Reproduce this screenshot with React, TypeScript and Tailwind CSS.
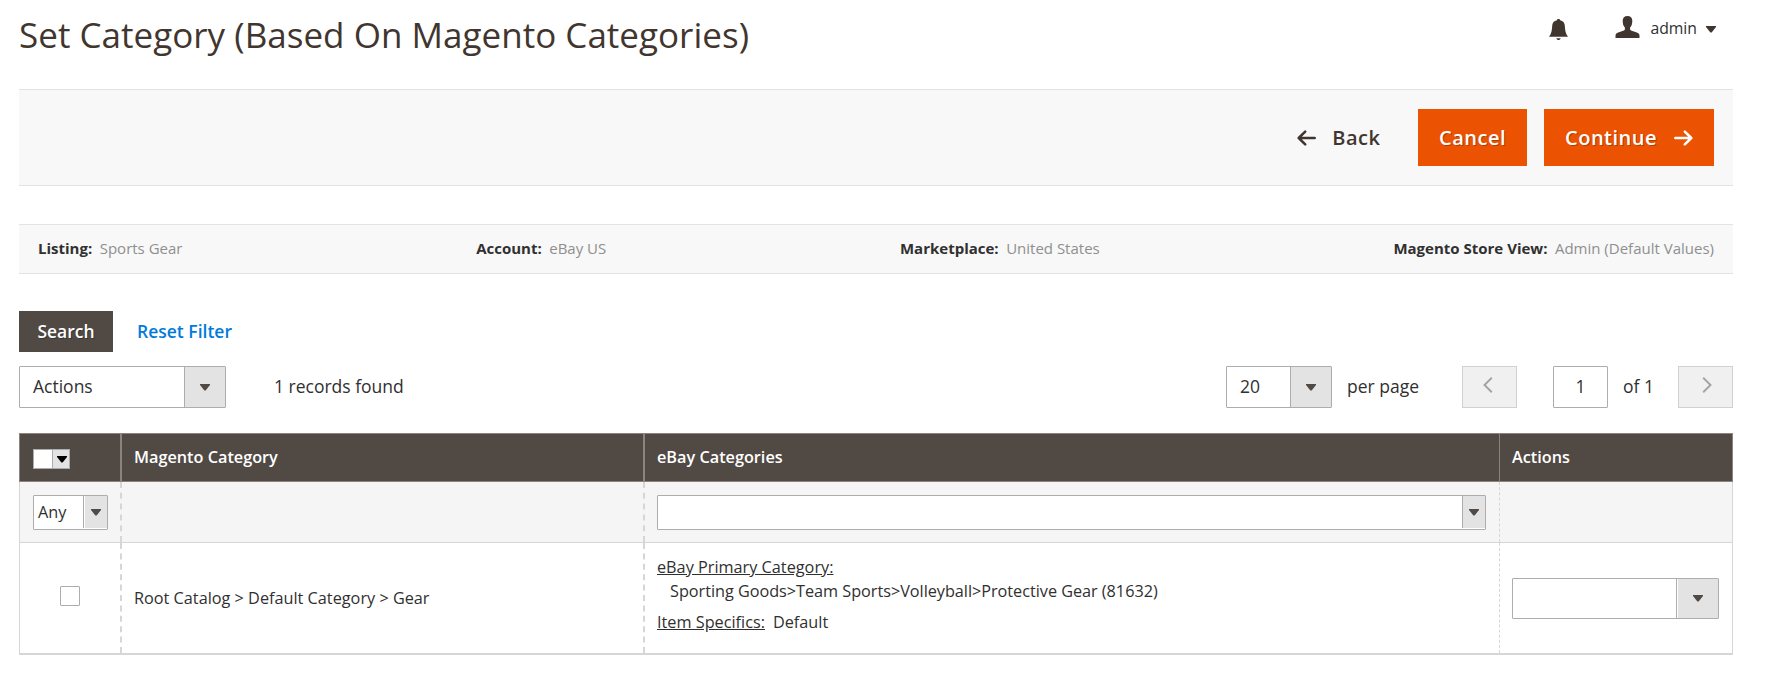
import clsx from 'clsx';

interface SelectBoxProps {
    value?: string;
    className?: string;
    arrowClassName?: string;
}

const infoItems = [
    { label: 'Listing:', value: 'Sports Gear' },
    { label: 'Account:', value: 'eBay US' },
    { label: 'Marketplace:', value: 'United States' },
    { label: 'Magento Store View:', value: 'Admin (Default Values)' },
];

function Caret({ className = 'text-[#514943]' }: { className?: string }) {
    return (
        <svg width="10" height="7" viewBox="0 0 10 7" className={clsx('shrink-0', className)} fill="currentColor">
            <path d="M0 0h10v1L5.6 6.6h-1.2L0 1z" />
        </svg>
    );
}

function BellIcon() {
    return (
        <svg width="19" height="22" viewBox="0 0 19 22" fill="#41362f" className="mt-1">
            <path d="M9.5 0c1 0 1.5.6 1.6 1.2 3 .6 4.5 2.6 4.7 5.3.2 4.3.6 8 3.2 11.2H0C2.6 14.5 3 10.8 3.2 6.5 3.4 3.8 4.9 1.8 7.9 1.2 8 .6 8.5 0 9.5 0z" />
            <path d="M7.3 19.2h4.4c-.3 1.2-1.1 1.8-2.2 1.8s-1.9-.6-2.2-1.8z" />
        </svg>
    );
}

function UserIcon() {
    return (
        <svg width="25" height="22" viewBox="0 0 25 22" fill="#41362f" className="-mt-1">
            <path d="M12.5 0c3 0 4.8 1.7 4.8 4.7 0 3-.6 5.3-2.2 6.9v1.8c.5 1.2 2.3 1.6 4.6 2.4 3.3 1.1 4.8 1.9 4.8 3.9v2.3H.5v-2.3c0-2 1.5-2.8 4.8-3.9 2.3-.8 4.1-1.2 4.6-2.4v-1.8C8.3 10 7.7 7.7 7.7 4.7 7.7 1.7 9.5 0 12.5 0z" />
        </svg>
    );
}

function ArrowIcon({ flipped }: { flipped?: boolean }) {
    return (
        <svg
            width="19"
            height="16"
            viewBox="0 0 19 16"
            fill="none"
            stroke="currentColor"
            strokeWidth="2.5"
            strokeLinecap="round"
            strokeLinejoin="round"
            className={clsx('shrink-0', flipped && '-scale-x-100')}
        >
            <path d="M1.3 8h16M10.8 1.6 17.3 8l-6.5 6.4" />
        </svg>
    );
}

function Chevron({ flipped }: { flipped?: boolean }) {
    return (
        <svg
            width="10"
            height="16"
            viewBox="0 0 10 16"
            fill="none"
            stroke="#a6a29f"
            strokeWidth="1.9"
            className={clsx('-mt-1', flipped ? 'mr-1 -scale-x-100' : 'ml-[3px]')}
        >
            <path d="M1.2 .8 8.5 8l-7.3 7.2" />
        </svg>
    );
}

// Select-like box with the grey arrow cell on the right
function SelectBox({ value, className, arrowClassName }: SelectBoxProps) {
    return (
        <div className={clsx('flex rounded-[1px] border border-[#adadad] bg-white', className)}>
            <span className="-mt-0.5 flex flex-1 items-center">{value}</span>
            <span className={clsx('flex items-center justify-center border-l border-[#adadad]', arrowClassName)}>
                <Caret />
            </span>
        </div>
    );
}

function PageHeader() {
    return (
        <header className="flex h-[89px] items-start justify-between">
            <h1 className="pt-[11px] text-[35px] leading-[48px] tracking-[0.02px] text-[#41362f]">
                Set Category (Based On Magento Categories)
            </h1>
            <div className="flex items-start pt-[15px] pr-[17px]">
                <BellIcon />
                <div className="mt-0.5 ml-[47px] flex h-6 items-center">
                    <UserIcon />
                    <span className="mr-[9px] ml-[10px] text-[15.75px]">admin</span>
                    <Caret className="text-[#41362f]" />
                </div>
            </div>
        </header>
    );
}

function PageActions() {
    return (
        <div className="flex h-[97px] items-center justify-end border-y border-[#e3e3e3] bg-[#f8f8f8] pr-[19px] text-[20px] font-semibold tracking-[0.5px]">
            <button className="mr-[37.5px] flex items-center gap-4 text-[#41362f]">
                <ArrowIcon flipped />
                Back
            </button>
            <button className="mr-[17px] flex h-[57px] w-[109px] items-center justify-center bg-[#eb5202] text-white text-shadow-[1px_1px_0_rgba(0,0,0,0.25)]">
                Cancel
            </button>
            <button className="flex h-[57px] w-[170px] items-center justify-between bg-[#eb5202] px-[21px] text-white text-shadow-[1px_1px_0_rgba(0,0,0,0.25)]">
                Continue
                <ArrowIcon />
            </button>
        </div>
    );
}

function ListingInfo() {
    return (
        <div className="mt-[38px] flex h-[50px] items-center justify-between border-y border-[#e3e3e3] bg-[#f8f8f8] px-[19px] pb-0.5 text-[15px]">
            {infoItems.map(item => (
                <div key={item.label} className="flex gap-[7.5px]">
                    <span className="font-bold">{item.label}</span>
                    <span className="text-[#8f8f8f]">{item.value}</span>
                </div>
            ))}
        </div>
    );
}

function GridToolbar() {
    return (
        <div className="mt-[37px] text-[17.5px]">
            <div className="flex items-center font-semibold">
                <button className="h-[41px] w-[94px] bg-[#514943] text-white text-shadow-[1px_1px_0_rgba(0,0,0,0.3)]">Search</button>
                <button className="ml-6 text-[#007bdb]">Reset Filter</button>
            </div>
            <div className="mt-[14px] flex items-center">
                <SelectBox value="Actions" className="h-[42px] w-[207px] pl-[13px]" arrowClassName="w-[41px] bg-[#e3e3e3]" />
                <span className="-mt-0.5 ml-12">1 records found</span>
                <div className="ml-auto flex items-center">
                    <SelectBox value="20" className="h-[42px] w-[106px] pl-[13px]" arrowClassName="w-[41px] bg-[#e3e3e3]" />
                    <span className="-mt-0.5 ml-[15px] w-[115px]">per page</span>
                    <button className="flex h-[42px] w-[55px] items-center justify-center border border-[#d1d1d1] bg-[#f0f0f0]">
                        <Chevron flipped />
                    </button>
                    <input
                        readOnly
                        value="1"
                        className="ml-9 h-[42px] w-[55px] rounded-[1px] border border-[#adadad] bg-white pb-0.5 text-center"
                    />
                    <span className="-mt-0.5 ml-[15px] w-[55px]">of 1</span>
                    <button className="flex h-[42px] w-[55px] items-center justify-center border border-[#d1d1d1] bg-[#f0f0f0]">
                        <Chevron />
                    </button>
                </div>
            </div>
        </div>
    );
}

function CategoryTable() {
    return (
        <div className="mt-[25px] text-[16.25px] leading-6">
            <div className="grid h-[49px] grid-cols-[103px_523px_855px_233px] border-y border-[#8a837f] bg-[#514943] font-semibold text-white">
                <div className="flex items-center border-r-2 border-l border-[#8a837f] pl-[13px]">
                    <div className="mt-[3px] flex h-5 w-[37px] border border-[#adadad] bg-white">
                        <span className="ml-[18px] flex flex-1 items-center justify-center border-l border-[#adadad] bg-[#e3e3e3] pt-px pl-px">
                            <Caret className="text-black" />
                        </span>
                    </div>
                </div>
                <div className="flex items-center border-r-2 border-[#8a837f] pb-0.5 pl-3">Magento Category</div>
                <div className="flex items-center border-r border-[#8a837f] pb-0.5 pl-3">eBay Categories</div>
                <div className="flex items-center border-r border-[#8a837f] pb-0.5 pl-3">Actions</div>
            </div>

            <div className="grid h-[61px] grid-cols-[103px_523px_855px_233px] border-b border-[#d6d6d6] bg-[#f5f5f5]">
                <div className="border-r-2 border-l border-[#d6d6d6] [border-right-style:dashed] pt-[13px] pl-[13px]">
                    <SelectBox value="Any" className="h-[35px] w-[75px] pl-1" arrowClassName="mb-px w-6 bg-[#e3e3e3] shadow-[inset_1px_0_0_white]" />
                </div>
                <div className="border-r-2 border-dashed border-[#d6d6d6]" />
                <div className="border-r border-dashed border-[#d6d6d6] px-3 pt-[13px]">
                    <SelectBox className="h-[35px] w-[829px]" arrowClassName="mb-px w-[23px] bg-[#e3e3e3]" />
                </div>
                <div className="border-r border-[#d6d6d6]" />
            </div>

            <div className="grid h-[112px] grid-cols-[103px_523px_855px_233px] border-b-2 border-[#d6d6d6] bg-white">
                <div className="flex items-center justify-center border-r-2 border-l border-[#d6d6d6] [border-right-style:dashed]">
                    <span className="-mt-1 size-5 rounded-[1px] border border-[#adadad] bg-white" />
                </div>
                <div className="flex items-center border-r-2 border-dashed border-[#d6d6d6] pl-3">
                    Root Catalog &gt; Default Category &gt; Gear
                </div>
                <div className="border-r border-dashed border-[#d6d6d6] pt-3 pl-3">
                    <p className="underline">eBay Primary Category:</p>
                    <p className="pl-[13px] tracking-[-0.03px]">
                        Sporting Goods&gt;Team Sports&gt;Volleyball&gt;Protective Gear (81632)
                    </p>
                    <p className="mt-[7px] flex gap-2">
                        <span className="underline">Item Specifics:</span>
                        <span>Default</span>
                    </p>
                </div>
                <div className="flex items-center border-r border-[#d6d6d6] pt-px pl-3">
                    <SelectBox className="h-[41px] w-[207px]" arrowClassName="w-[42px] bg-[#e3e3e3] shadow-[inset_1px_0_0_white]" />
                </div>
            </div>
        </div>
    );
}

export default function App() {
    return (
        <div className="h-[682px] w-[1768px] overflow-hidden bg-white pr-[35px] pl-[19px] font-['Open_Sans',sans-serif] text-[#303030]">
            <PageHeader />
            <PageActions />
            <ListingInfo />
            <GridToolbar />
            <CategoryTable />
        </div>
    );
}
